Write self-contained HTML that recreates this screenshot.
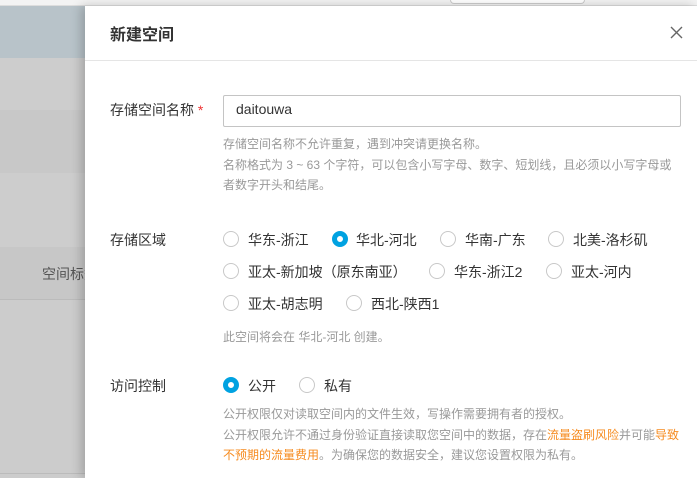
<!DOCTYPE html>
<html><head><meta charset="utf-8"><style>
*{margin:0;padding:0;box-sizing:border-box}
body{width:697px;height:478px;overflow:hidden;position:relative;font-family:"Liberation Sans","Noto Sans CJK SC",sans-serif;background:#ccc}
.abs{position:absolute}
.bg{left:0;width:697px}
.panel{left:85px;top:6px;width:612px;height:472px;background:#fff;box-shadow:-4px 0 10px rgba(0,0,0,.2)}
.t{position:absolute;white-space:nowrap}
.lbl{font-size:14px;color:#333}
.hint{font-size:12px;color:#999;line-height:20.5px}
.r{position:absolute;width:16px;height:16px;border:1px solid #c8c8c8;border-radius:50%;background:#fff}
.r.on{border:5px solid #00a2e1}
.o{color:#f68b1f}
</style></head><body>
<div class="abs bg" style="top:0;height:6px;background:#f3f3f3;border-bottom:1px solid #ddd"></div>
<div class="abs" style="left:450px;top:0;width:135px;height:4px;border:1px solid #ccc;border-top:none;border-radius:0 0 4px 4px;background:#fff"></div>
<div class="abs bg" style="top:6px;height:52px;background:#b8c3c9"></div>
<div class="abs bg" style="top:58px;height:52px;background:#cdcdcd"></div>
<div class="abs bg" style="top:110px;height:63px;background:#c8c8c8"></div>
<div class="abs bg" style="top:173px;height:74px;background:#cdcdcd"></div>
<div class="abs bg" style="top:247px;height:53px;background:#c7c7c7;border-bottom:1px solid #bbb"></div>
<div class="abs bg" style="top:473px;height:1px;background:#bbb"></div>
<div class="t lbl" style="left:42px;top:264px;color:#555">空间标签</div>
<div class="abs panel">
<div class="t" style="left:25px;top:15px;font-size:16px;color:#333;font-weight:bold">新建空间</div>
<svg class="abs" style="left:585px;top:20px" width="13" height="13" viewBox="0 0 13 13"><path d="M1 1L12 12M12 1L1 12" stroke="#666" stroke-width="1.4" fill="none"/></svg>
<div class="abs" style="left:0;top:54px;width:612px;height:1px;background:#e5e5e5"></div>
<div class="t lbl" style="left:25px;top:94px">存储空间名称 <span style="color:#e33">*</span></div>
<div class="abs" style="left:138px;top:89px;width:458px;height:32px;border:1px solid #c4c4c4;border-radius:2px"></div>
<div class="t" style="left:151px;top:95px;font-size:14px;color:#333">daitouwa</div>
<div class="t hint" style="left:138px;top:128px">存储空间名称不允许重复，遇到冲突请更换名称。<br>名称格式为 3 ~ 63 个字符，可以包含小写字母、数字、短划线，且必须以小写字母或<br>者数字开头和结尾。</div>
<div class="t lbl" style="left:25px;top:224px">存储区域</div>
<div class="r" style="left:138px;top:225px"></div><div class="t lbl" style="left:163px;top:224px">华东-浙江</div>
<div class="r on" style="left:247px;top:225px"></div><div class="t lbl" style="left:271px;top:224px">华北-河北</div>
<div class="r" style="left:355px;top:225px"></div><div class="t lbl" style="left:380px;top:224px">华南-广东</div>
<div class="r" style="left:463px;top:225px"></div><div class="t lbl" style="left:488px;top:224px">北美-洛杉矶</div>
<div class="r" style="left:138px;top:257px"></div><div class="t lbl" style="left:163px;top:256px">亚太-新加坡（原东南亚）</div>
<div class="r" style="left:344px;top:257px"></div><div class="t lbl" style="left:369px;top:256px">华东-浙江2</div>
<div class="r" style="left:461px;top:257px"></div><div class="t lbl" style="left:486px;top:256px">亚太-河内</div>
<div class="r" style="left:138px;top:289px"></div><div class="t lbl" style="left:163px;top:288px">亚太-胡志明</div>
<div class="r" style="left:261px;top:289px"></div><div class="t lbl" style="left:286px;top:288px">西北-陕西1</div>
<div class="t hint" style="left:138px;top:321px">此空间将会在 华北-河北 创建。</div>
<div class="t lbl" style="left:25px;top:370px">访问控制</div>
<div class="r on" style="left:138px;top:371px"></div><div class="t lbl" style="left:163px;top:370px">公开</div>
<div class="r" style="left:214px;top:371px"></div><div class="t lbl" style="left:239px;top:370px">私有</div>
<div class="t hint" style="left:138px;top:398px">公开权限仅对读取空间内的文件生效，写操作需要拥有者的授权。<br>公开权限允许不通过身份验证直接读取您空间中的数据，存在<span class="o">流量盗刷风险</span>并可能<span class="o">导致</span><br><span class="o">不预期的流量费用</span>。为确保您的数据安全，建议您设置权限为私有。</div>
</div>
</body></html>
